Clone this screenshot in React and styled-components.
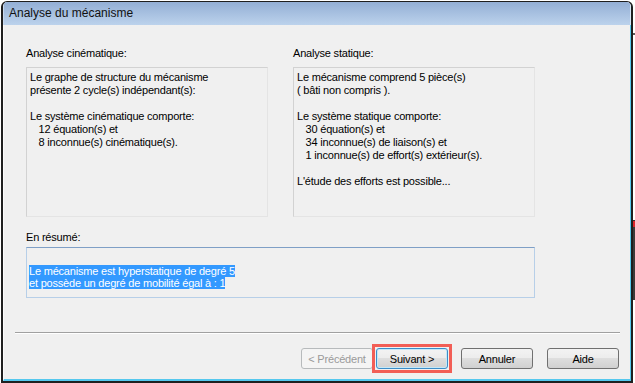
import React from 'react';
import styled, { createGlobalStyle } from 'styled-components';

const GlobalStyle = createGlobalStyle`
  html, body {
    margin: 0;
    padding: 0;
    background: #fff;
  }
  body {
    font-family: "Liberation Sans", Arial, sans-serif;
    overflow: hidden;
  }
`;

const Page = styled.div`
  display: flex;
  align-items: flex-start;
  width: 635px;
  height: 383px;
  overflow: hidden;
`;

const Window = styled.div`
  margin: 1px 0 0 1px;
  width: 632px;
  height: 382px;
  flex-shrink: 0;
  box-sizing: border-box;
  border: 2px solid #1f1f1f;
  border-top-width: 1px;
  border-radius: 6px 6px 0 0;
  display: flex;
  flex-direction: column;
  overflow: hidden;
  background: #f0f0f0;
`;

const TitleBar = styled.div`
  height: 23px;
  flex-shrink: 0;
  padding-left: 5px;
  background: linear-gradient(#93afd5, #bcd2ec);
  border-left: 1px solid #c9d9ee;
  border-right: 1px solid #d6e6f6;
  font-size: 12px;
  line-height: 23px;
  color: #111;
`;

const Client = styled.div`
  flex: 1;
  display: flex;
  flex-direction: column;
  background: #f0f0f0;
  border-left: 1px solid #fbfbfb;
  border-right: 1px solid #55c8ee;
  border-bottom: 2px solid #55c8ee;
  font-size: 11px;
  letter-spacing: -0.2px;
  color: #000;
`;

const Content = styled.div`
  padding: 22px 0 0 22px;
  display: flex;
  flex-direction: column;
`;

const Columns = styled.div`
  display: flex;
  gap: 25px;
`;

const Group = styled.div`
  width: 242px;
  display: flex;
  flex-direction: column;
`;

const Label = styled.div`
  height: 13px;
  line-height: 13px;
  margin: ${p => p.$top || 0}px 0 ${p => p.$bottom}px;
  white-space: pre;
`;

const InfoBox = styled.div`
  height: 150px;
  box-sizing: border-box;
  padding: 3px;
  border: 1px solid #d2d2d2;
  border-right-color: #e4e4e4;
  border-bottom-color: #e4e4e4;
  line-height: 13px;
  white-space: pre;
`;

const SummaryBox = styled.div`
  width: 509px;
  height: 51px;
  box-sizing: border-box;
  padding: 17px 2px 0;
  border: 1px solid #b7cfe8;
  border-top-color: #7f9fc6;
  line-height: 12px;
  white-space: pre;
`;

const Selected = styled.span`
  display: block;
  width: fit-content;
  height: 12px;
  background: #3399ff;
  color: #fff;
`;

const Separator = styled.div`
  width: 605px;
  margin: 34px 0 0 11px;
  border-top: 1px solid #a0a0a0;
  border-bottom: 1px solid #fff;
`;

const Footer = styled.div`
  display: flex;
  align-items: flex-start;
  justify-content: flex-end;
  margin-top: 14px;
  padding-right: 11px;
`;

const Button = styled.button`
  width: 72px;
  height: 21px;
  margin-left: ${p => p.$space || 0}px;
  padding: 0;
  box-sizing: border-box;
  border: 1px solid #707070;
  border-radius: 3px;
  background: linear-gradient(#f3f3f3 0%, #ececec 50%, #dedede 50%, #d0d0d0 100%);
  font-family: "Liberation Sans", Arial, sans-serif;
  font-size: 11px;
  letter-spacing: -0.2px;
  color: #000;

  &:disabled {
    border-color: #b7babc;
    background: #f4f4f4;
    color: #9a9a9a;
  }
`;

const DefaultButton = styled(Button)`
  border-color: #3c8dc8;
  box-shadow: inset 0 0 0 1px #c4e8f8;
`;

/* red annotation frame drawn over the default button */
const Callout = styled.div`
  display: flex;
  margin: -4px -4px -4px ${p => p.$space - 4}px;
  padding: 1px;
  border: 3px solid #f25e56;
`;

const Backdrop = styled.div`
  width: 2px;
  flex-shrink: 0;
  display: flex;
  flex-direction: column;
`;

const Mark = styled.div`
  height: ${p => p.$h}px;
  margin-top: ${p => p.$top}px;
  background: ${p => p.$color};
`;

const kinematic = `Le graphe de structure du mécanisme
présente 2 cycle(s) indépendant(s):

Le système cinématique comporte:
   12 équation(s) et
   8 inconnue(s) cinématique(s).`;

const statics = `Le mécanisme comprend 5 pièce(s)
( bâti non compris ).

Le système statique comporte:
   30 équation(s) et
   34 inconnue(s) de liaison(s) et
   1 inconnue(s) de effort(s) extérieur(s).

L'étude des efforts est possible...`;

export default function App() {
  return (
    <Page>
      <GlobalStyle />
      <Window>
        <TitleBar>Analyse du mécanisme</TitleBar>
        <Client>
          <Content>
            <Columns>
              <Group>
                <Label $bottom={7}>Analyse cinématique:</Label>
                <InfoBox>{kinematic}</InfoBox>
              </Group>
              <Group>
                <Label $bottom={7}>Analyse statique:</Label>
                <InfoBox>{statics}</InfoBox>
              </Group>
            </Columns>
            <Label $top={14} $bottom={3}>En résumé:</Label>
            <SummaryBox>
              <Selected>Le mécanisme est hyperstatique de degré 5</Selected>
              <Selected>et possède un degré de mobilité égal à : 1</Selected>
            </SummaryBox>
          </Content>
          <Separator />
          <Footer>
            <Button disabled>&lt; Précédent</Button>
            <Callout $space={3}>
              <DefaultButton>Suivant &gt;</DefaultButton>
            </Callout>
            <Button $space={13}>Annuler</Button>
            <Button $space={14}>Aide</Button>
          </Footer>
        </Client>
      </Window>
      <Backdrop>
        <Mark $top={33} $h={2} $color="#5a5a5a" />
        <Mark $top={185} $h={1} $color="#333" />
        <Mark $top={0} $h={6} $color="#d8262b" />
        <Mark $top={0} $h={73} $color="#3a3a3a" />
      </Backdrop>
    </Page>
  );
}
